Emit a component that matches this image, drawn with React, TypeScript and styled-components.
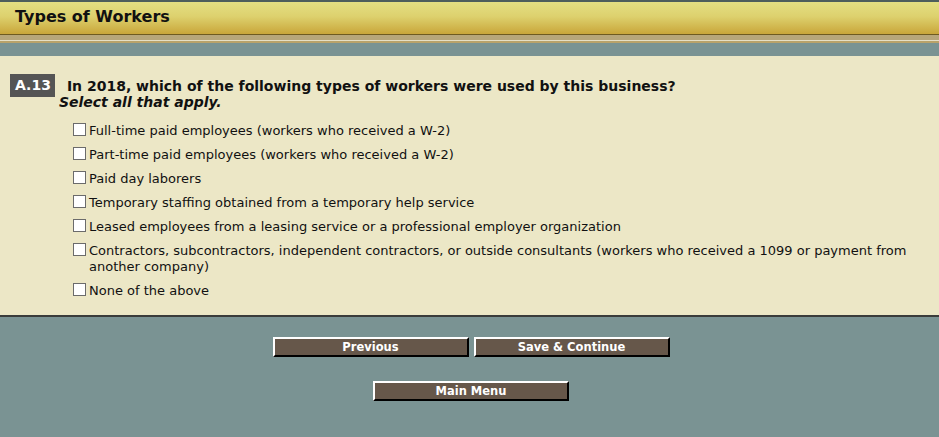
import styled, { createGlobalStyle } from "styled-components";

const GlobalStyle = createGlobalStyle`
  html, body {
    margin: 0;
    padding: 0;
    background: #7a9393;
  }
  body {
    font-family: "DejaVu Sans", Verdana, sans-serif;
    color: #111;
  }
`;

const Page = styled.div`
  width: 939px;
  min-height: 437px;
  background: #7a9393;
  border-top: 2px solid #4e5e5c;
`;

const TitleBar = styled.div`
  height: 32px;
  background: linear-gradient(#e4df82 0%, #ddd16e 45%, #c9a63a 100%);
  border-bottom: 1px solid #6e5a20;
  display: flex;
  align-items: center;
  padding-left: 15px;
`;

const Title = styled.h1`
  margin: 0 0 4px;
  font-size: 16px;
  font-weight: bold;
  color: #111;
`;

const Trim = styled.div`
  height: 8px;
  background: linear-gradient(
    #b7a67a 0px,
    #b7a67a 5px,
    #e6dfc6 5px,
    #e6dfc6 6px,
    #b9a26a 6px,
    #b9a26a 8px
  );
`;

const Spacer = styled.div`
  height: 13px;
`;

const Panel = styled.section`
  background: #ece7c6;
  padding: 18px 0 16px;
  border-bottom: 2px solid #3a3c3a;
`;

const QuestionHead = styled.div`
  display: flex;
  align-items: flex-start;
  padding-left: 10px;
`;

const Badge = styled.span`
  background: #555555;
  color: #fff;
  font-weight: bold;
  font-size: 14px;
  padding: 4px 4px 4px 5px;
  line-height: 15px;
  margin-right: 12px;
`;

const QuestionText = styled.div`
  font-size: 14px;
  font-weight: bold;
  line-height: 16px;
  padding-top: 4px;
`;

const Prompt = styled.span`
  display: block;
  font-style: italic;
  margin-left: -8px;
`;

const Options = styled.ul`
  list-style: none;
  margin: 13px 0 0;
  padding: 0 30px 0 73px;
  display: flex;
  flex-direction: column;
  gap: 8px;
`;

const Option = styled.li`
  display: flex;
  align-items: flex-start;
  font-size: 13px;
  line-height: 16px;
`;

const Box = styled.span`
  flex: none;
  width: 11px;
  height: 11px;
  border: 1px solid #6b6b6b;
  background: #fff;
  margin-right: 3px;
`;

const Nav = styled.div`
  display: flex;
  flex-direction: column;
  align-items: center;
  gap: 24px;
  padding: 20px 0 0 3px;
`;

const ButtonRow = styled.div`
  display: flex;
  gap: 5px;
`;

const NavButton = styled.button`
  width: 196px;
  height: 20px;
  background: #66574a;
  color: #fff;
  font-family: "DejaVu Sans", Tahoma, sans-serif;
  font-weight: bold;
  font-size: 11.5px;
  border-style: solid;
  border-width: 2px;
  border-color: #fff #000 #000 #fff;
  padding: 0;
  cursor: pointer;
`;

const workerTypes = [
  "Full-time paid employees (workers who received a W-2)",
  "Part-time paid employees (workers who received a W-2)",
  "Paid day laborers",
  "Temporary staffing obtained from a temporary help service",
  "Leased employees from a leasing service or a professional employer organization",
  "Contractors, subcontractors, independent contractors, or outside consultants (workers who received a 1099 or payment from another company)",
  "None of the above",
];

export default function App() {
  return (
    <Page>
      <GlobalStyle />
      <TitleBar>
        <Title>Types of Workers</Title>
      </TitleBar>
      <Trim />
      <Spacer />
      <Panel>
        <QuestionHead>
          <Badge>A.13</Badge>
          <QuestionText>
            In 2018, which of the following types of workers were used by this business?
            <Prompt>Select all that apply.</Prompt>
          </QuestionText>
        </QuestionHead>
        <Options>
          {workerTypes.map((t) => (
            <Option key={t}>
              <Box />
              <span>{t}</span>
            </Option>
          ))}
        </Options>
      </Panel>
      <Nav>
        <ButtonRow>
          <NavButton>Previous</NavButton>
          <NavButton>Save &amp; Continue</NavButton>
        </ButtonRow>
        <NavButton>Main Menu</NavButton>
      </Nav>
    </Page>
  );
}
